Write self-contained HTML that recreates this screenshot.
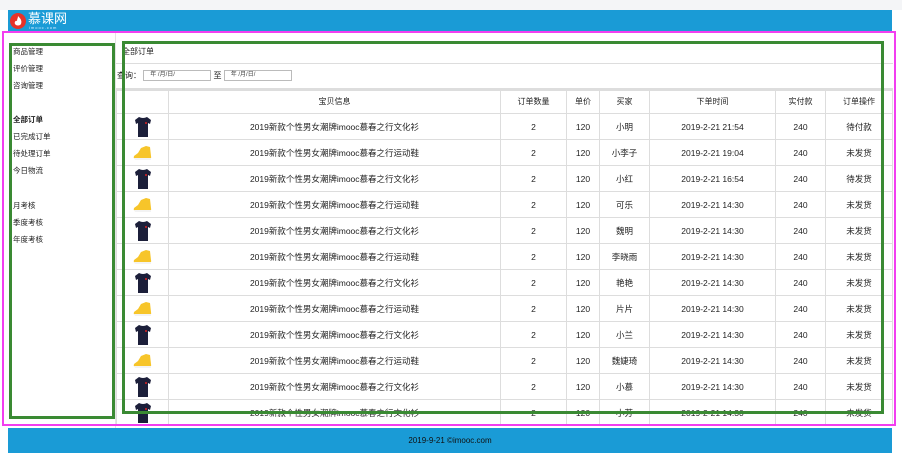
<!DOCTYPE html>
<html><head><meta charset="utf-8"><style>
*{margin:0;padding:0;box-sizing:border-box}
body{width:902px;height:453px;overflow:hidden;background:#fff;font-family:"Liberation Sans","Noto Sans CJK SC",sans-serif;font-size:8px;color:#222;position:relative}
.top{position:absolute;left:0;top:0;width:902px;height:10px;background:#f4f5f7}
.hdr{position:absolute;left:8px;top:10px;width:884px;height:23px;background:#1a9bd6}
.logo{position:absolute;left:2px;top:3px;width:16px;height:16px;border-radius:50%;background:#e7332a}
.logot{position:absolute;left:20px;top:2px;color:#fff;font-size:13px;line-height:14px}
.logos{position:absolute;left:21px;top:15px;color:#dbefff;font-size:4px;letter-spacing:1px}
.side{position:absolute;left:8px;top:33px;width:108px;height:395px;background:#fff;border-right:1px solid #e4e4e4}
.side div{position:absolute;left:5px;font-size:7.5px}
.main{position:absolute;left:116px;top:33px;width:777px;height:395px;overflow:hidden;background:#fff}
.r1{position:absolute;left:0;top:8px;width:777px;height:23px;border-bottom:1px solid #ddd;padding:5px 6px}
.r2{position:absolute;left:0;top:31px;width:777px;height:26px;border-bottom:2px solid #ddd;padding:6px 1px}
.inp{display:inline-block;width:68px;height:11px;border:1px solid #bbb;font-size:6px;line-height:9px;padding-left:6px;vertical-align:middle;color:#444}
table{position:absolute;left:0;top:57px;width:777px;border-collapse:collapse;table-layout:fixed}
td,th{border:1px solid #ddd;height:26px;padding:0;line-height:10px;text-align:center;font-weight:normal;font-size:8.5px;overflow:hidden}
td svg{display:block;margin:0 auto}
th{height:23px;font-size:8px}
.foot{position:absolute;left:8px;top:428px;width:884px;height:25px;background:#1a9bd6;text-align:center;line-height:25px;font-size:8px;color:#111}
.mag{position:absolute;left:2px;top:31px;width:894px;height:395px;border:2px solid #f23ef0}
.g1{position:absolute;left:9px;top:43px;width:106px;height:376px;border:3px solid #3a8a33}
.g2{position:absolute;left:122px;top:41px;width:762px;height:373px;border:3px solid #3a8a33}
</style></head><body>
<div class="top"></div>
<div class="hdr"><div class="logo"><svg width="16" height="16"><path d="M8 3 C11 6 12 8 11 11 C10 13 6 13 5 11 C4 9 6 7 7 8 C7 6 8 5 8 3Z" fill="#fff"/></svg></div><div class="logot">慕课网</div><div class="logos">imooc.com</div></div>
<div class="side">
<div style="top:13px">商品管理</div><div style="top:30px">评价管理</div><div style="top:47px">咨询管理</div>
<div style="top:81px;font-weight:bold">全部订单</div><div style="top:98px">已完成订单</div><div style="top:115px">待处理订单</div><div style="top:132px">今日物流</div>
<div style="top:167px">月考核</div><div style="top:184px">季度考核</div><div style="top:201px">年度考核</div>
</div>
<div class="main">
<div class="r1">全部订单</div>
<div class="r2">查询： <span class="inp">年 /月/日/</span> 至 <span class="inp">年 /月/日/</span></div>
<table>
<tr><th style="width:52px"></th><th style="width:332px">宝贝信息</th><th style="width:66px">订单数量</th><th style="width:33px">单价</th><th style="width:50px">买家</th><th style="width:126px">下单时间</th><th style="width:50px">实付款</th><th>订单操作</th></tr>
<tbody id="tb">
</tbody></table>
</div>
<div class="mag"></div><div class="g1"></div><div class="g2"></div>
<div class="foot">2019-9-21 ©imooc.com</div>
<script>
var shirt='<svg width="20" height="24" viewBox="0 0 20 22"><path d="M6 1 L2 4 L3 8 L5 7 L5 21 L15 21 L15 7 L17 8 L18 4 L14 1 Q10 3 6 1Z" fill="#1c1f3a"/><circle cx="13" cy="7" r="1" fill="#d22"/></svg>';
var shoe='<svg width="22" height="16" viewBox="0 0 22 16"><path d="M2 11 L6 8 L9 3 L14 1 L18 2 L19 11 Q20 14 16 14 L4 14 Q1 14 2 11Z" fill="#f7c52a"/><path d="M2 13 L19 13 L19 15 L3 15Z" fill="#f3f3f3"/></svg>';
var d=[["小明","21:54","待付款"],["小李子","19:04","未发货"],["小红","16:54","待发货"],["可乐","14:30","未发货"],["魏明","14:30","未发货"],["李晓雨","14:30","未发货"],["艳艳","14:30","未发货"],["片片","14:30","未发货"],["小兰","14:30","未发货"],["魏婕琦","14:30","未发货"],["小慕","14:30","未发货"],["小芳","14:30","未发货"]];
var h='';d.forEach(function(r,i){var s=(i%2)&&i<11;h+='<tr><td>'+(s?shoe:shirt)+'</td><td>2019新款个性男女潮牌imooc慕春之行'+(s?'运动鞋':'文化衫')+'</td><td>2</td><td>120</td><td>'+r[0]+'</td><td>2019-2-21 '+r[1]+'</td><td>240</td><td>'+r[2]+'</td></tr>';});
document.getElementById('tb').innerHTML=h;
</script>
</body></html>
